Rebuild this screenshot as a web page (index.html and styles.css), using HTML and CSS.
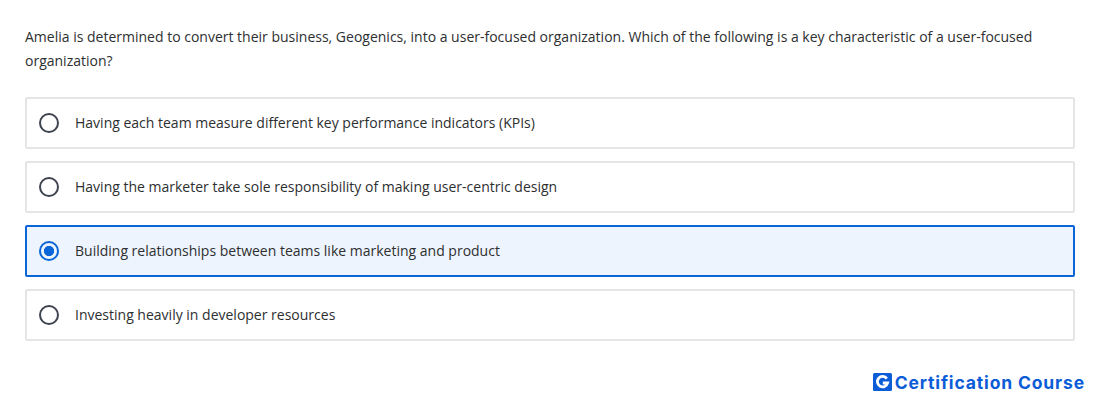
FILE: index.html
```html
<!DOCTYPE html>
<html lang="en">
<head>
<meta charset="utf-8">
<title>Question</title>
<link rel="stylesheet" href="styles.css">
</head>
<body>
<main class="quiz">
  <p class="question">Amelia is determined to convert their business, Geogenics, into a user-focused organization. Which of the following is a key characteristic of a user-focused organization?</p>
  <div class="options">
    <div class="option"><span class="radio"></span><span class="label">Having each team measure different key performance indicators (KPIs)</span></div>
    <div class="option"><span class="radio"></span><span class="label">Having the marketer take sole responsibility of making user-centric design</span></div>
    <div class="option selected"><span class="radio"></span><span class="label">Building relationships between teams like marketing and product</span></div>
    <div class="option"><span class="radio"></span><span class="label">Investing heavily in developer resources</span></div>
  </div>
  <footer class="brand">
    <span class="logo">
      <svg viewBox="0 0 19 18" width="19" height="18" aria-hidden="true"><rect width="19" height="18" rx="1.5" fill="#0b5cd7"/><path d="M13.8 5.6A5.2 5.2 0 1 0 14.6 10H9.8" fill="none" stroke="#fff" stroke-width="2.8"/></svg>
    </span>
    <span class="brand-text">Certification Course</span>
  </footer>
</main>
</body>
</html>
```
FILE: styles.css
```css
* { box-sizing: border-box; }
html, body { margin: 0; background: #fff; }
body { height: 401px; overflow: hidden; font-family: "Open Sans", sans-serif; color: #2d2f31; }
.quiz { padding: 25px 25px 0; }
.question { margin: 0; font-size: 14px; line-height: 24px; width: 1040px; }
.options { margin-top: 24px; display: flex; flex-direction: column; gap: 12px; }
.option { height: 52px; display: flex; align-items: center; gap: 16px; padding-left: 12px; border: 2px solid #e4e5e7; border-radius: 2px; font-size: 14px; background: #fff; }
.label { padding-bottom: 2px; }
.radio { width: 20px; height: 20px; border-radius: 50%; border: 2.5px solid #3e4450; flex: none; }
.selected { border-color: #0a66d8; background: #edf4fd; }
.selected .radio { border-color: #0a66d8; background: radial-gradient(circle, #0a66d8 0 4.8px, transparent 5.4px); }
.brand { margin: 31px -10px 0 0; display: flex; justify-content: flex-end; align-items: center; gap: 3px; height: 20px; }
.logo { display: flex; }
.brand-text { font-family: Inter, sans-serif; font-weight: 700; font-size: 17.5px; letter-spacing: 0.85px; color: #0b5cd7; }
```
